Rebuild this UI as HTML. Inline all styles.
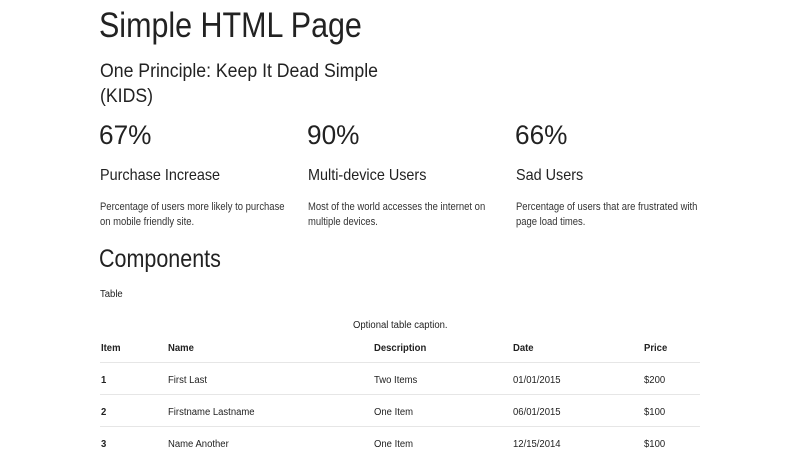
<!DOCTYPE html>
<html><head><meta charset="utf-8"><style>
*{margin:0;padding:0;box-sizing:border-box}
body{width:800px;height:450px;overflow:hidden;background:#fff;color:#222;font-family:"Liberation Sans",sans-serif;position:relative}
.a{position:absolute;white-space:nowrap;line-height:1;transform-origin:0 0}
.p{font-size:11px;color:#333;line-height:15px;transform:scaleX(.86)}
.t{font-size:10px;color:#222;transform:scaleX(.95)}
.b{font-weight:bold}
.ln{position:absolute;left:100px;width:600px;height:1px;background:#e6e6e6}
</style></head><body>
<div class="a" style="left:99px;top:8px;font-size:35px;transform:scaleX(.87)">Simple HTML Page</div>
<div class="a" style="left:100px;top:59px;font-size:19px;line-height:25px;transform:scaleX(.93)">One Principle: Keep It Dead Simple<br>(KIDS)</div>
<div class="a" style="left:99px;top:122px;font-size:27px;transform:scaleX(.97)">67%</div>
<div class="a" style="left:307px;top:122px;font-size:27px;transform:scaleX(.97)">90%</div>
<div class="a" style="left:515px;top:122px;font-size:27px;transform:scaleX(.97)">66%</div>
<div class="a" style="left:100px;top:168px;font-size:16px;transform:scaleX(.9)">Purchase Increase</div>
<div class="a" style="left:308px;top:168px;font-size:16px;transform:scaleX(.9)">Multi-device Users</div>
<div class="a" style="left:516px;top:168px;font-size:16px;transform:scaleX(.9)">Sad Users</div>
<div class="a p" style="left:100px;top:200px">Percentage of users more likely to purchase<br>on mobile friendly site.</div>
<div class="a p" style="left:308px;top:200px">Most of the world accesses the internet on<br>multiple devices.</div>
<div class="a p" style="left:516px;top:200px">Percentage of users that are frustrated with<br>page load times.</div>
<div class="a" style="left:99px;top:247px;font-size:25px;transform:scaleX(.86)">Components</div>
<div class="a t" style="left:100px;top:290px">Table</div>
<div class="a t" style="left:353px;top:321px">Optional table caption.</div>
<div class="a t b" style="left:101px;top:344px">Item</div>
<div class="a t b" style="left:168px;top:344px">Name</div>
<div class="a t b" style="left:374px;top:344px">Description</div>
<div class="a t b" style="left:513px;top:344px">Date</div>
<div class="a t b" style="left:644px;top:344px">Price</div>
<div class="ln" style="top:362px"></div>
<div class="a t b" style="left:101px;top:376px">1</div>
<div class="a t" style="left:168px;top:376px">First Last</div>
<div class="a t" style="left:374px;top:376px">Two Items</div>
<div class="a t" style="left:513px;top:376px">01/01/2015</div>
<div class="a t" style="left:644px;top:376px">$200</div>
<div class="ln" style="top:394px"></div>
<div class="a t b" style="left:101px;top:408px">2</div>
<div class="a t" style="left:168px;top:408px">Firstname Lastname</div>
<div class="a t" style="left:374px;top:408px">One Item</div>
<div class="a t" style="left:513px;top:408px">06/01/2015</div>
<div class="a t" style="left:644px;top:408px">$100</div>
<div class="ln" style="top:426px"></div>
<div class="a t b" style="left:101px;top:440px">3</div>
<div class="a t" style="left:168px;top:440px">Name Another</div>
<div class="a t" style="left:374px;top:440px">One Item</div>
<div class="a t" style="left:513px;top:440px">12/15/2014</div>
<div class="a t" style="left:644px;top:440px">$100</div>
</body></html>
